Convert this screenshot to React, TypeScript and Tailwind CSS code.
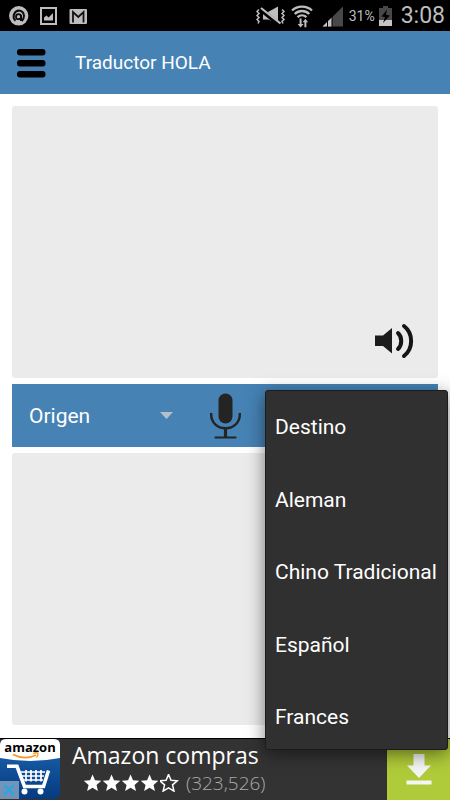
import { useState } from 'react'
import { clsx } from 'clsx'

const ORIGINS = ['Origen', 'Aleman', 'Chino Tradicional', 'Español', 'Frances']
const TARGETS = ['Destino', 'Aleman', 'Chino Tradicional', 'Español', 'Frances']

const STAR = 'M10 1l2.6 6.1 6.6.6-5 4.3 1.5 6.5L10 15.1l-5.7 3.4 1.5-6.5-5-4.3 6.6-.6z'

function StatusBar() {
  return (
    <div className="flex h-[31px] items-center justify-between bg-black pr-[5px] pl-2 font-['Roboto',sans-serif] text-[#bdbdbd]">
      <div className="flex items-center gap-[11px]">
        <svg width="21" height="20" viewBox="0 0 21 20" fill="none">
          <circle cx="10.7" cy="9.8" r="9.7" fill="#bdbdbd" />
          <path d="M7.500 14.800A6 6 0 0 1 10.700 4.500a5.300 5.300 0 0 1 5.300 5.300c0 2.400-.8 3.800-2.200 5.200" stroke="#0a0a0a" strokeWidth="2" />
          <path d="M13 9v6" stroke="#0a0a0a" strokeWidth="2" />
          <circle cx="10.500" cy="10.700" r="2.500" stroke="#0a0a0a" strokeWidth="1.800" />
        </svg>
        <svg width="18" height="20" viewBox="0 0 18 20">
          <path fillRule="evenodd" d="M0 1h17v18H0zM2 3v14h13V3z" fill="#bdbdbd" />
          <path d="M4 14.500v-3l2.500-2 2 2L13 7v7.500z" fill="#bdbdbd" />
        </svg>
        <svg width="19" height="20" viewBox="0 0 19 20" fill="none">
          <rect x="0.500" y="3" width="17.500" height="15" rx="1" fill="#bdbdbd" />
          <path d="M4 16.500V6l5.300 5L14.500 6v10.500" stroke="#111" strokeWidth="1.800" />
        </svg>
      </div>
      <div className="flex items-center">
        <svg width="92" height="24" viewBox="0 0 92 24" fill="none" className="mr-px">
          <g stroke="#bdbdbd" strokeWidth="1.500">
            <path d="M3 5.500l-2 2 2 2-2 2 2 2-2 2 2 2-1 2" />
            <path d="M26 5.500l2 2-2 2 2 2-2 2 2 2-2 2 1 2" />
          </g>
          <path d="M7 8h5L22 2.500v17L12 15.500H7z" fill="#bdbdbd" />
          <path d="M5 5.500L23 20.500" stroke="#000" strokeWidth="4.500" />
          <path d="M5 4L24.500 19.500" stroke="#bdbdbd" strokeWidth="2.200" />
          <g stroke="#bdbdbd" strokeWidth="2.300">
            <path d="M36 6.500c5.500-5.200 14.500-5.200 20 0" />
            <path d="M38.700 10c4.300-4 10.300-4 14.600 0" />
            <path d="M41.500 13.200c2.700-2.500 6.300-2.500 9 0" />
          </g>
          <path d="M43.600 14.500h2v5.500h2L44.600 23.500l-3-3.500h2zM48.400 23.200h2v-5h1.700L49.400 14.700l-2.800 3.500h1.800z" fill="#bdbdbd" />
          <path d="M87 2.500v20H66.500z" fill="#484848" />
          <path d="M76 13.200v9.300h-9.500z" fill="#c4c4c4" />
          <path d="M71.500 17v6M76 12v11" stroke="#000" />
        </svg>
        <span className="text-[14px] leading-5">31%</span>
        <svg width="13" height="22" viewBox="0 0 13 22" className="mr-[9px] ml-1">
          <path d="M4 1h5v2h4v18H0V3h4z" fill="#484848" />
          <path d="M0 15h13v6H0z" fill="#c4c4c4" />
          <path d="M8 4.500L2.500 11.500l3.500.5-2 6L11 10.500l-4-.8z" fill="#000" />
        </svg>
        <span className="text-[23px] leading-6">3:08</span>
      </div>
    </div>
  )
}

function AppHeader() {
  return (
    <header className="flex h-[63px] items-center gap-[29px] bg-[#4682b4] px-[17px]">
      <button type="button" aria-label="Menú">
        <svg width="29" height="30" viewBox="0 0 29 30">
          <rect y="1" width="28.500" height="6.500" rx="3" />
          <rect y="12" width="28.500" height="6.500" rx="3" />
          <rect y="23" width="28.500" height="6.500" rx="3" />
        </svg>
      </button>
      <h1 className="text-[19px] leading-6 text-white">Traductor HOLA</h1>
    </header>
  )
}

function LanguageMenu({ onSelect }: { onSelect: (value: string) => void }) {
  return (
    <ul className="absolute top-[6px] -right-[10px] z-10 flex h-[360px] w-[183px] flex-col justify-between rounded-[3px] border border-[#1c1c1c] bg-[#303030] pt-6 pb-5 shadow-[0_4px_18px_rgba(0,0,0,0.5)]">
      {TARGETS.map((name) => (
        <li key={name}>
          <button
            type="button"
            onClick={() => onSelect(name)}
            className="block w-full px-[9px] text-left text-[21px] leading-6 whitespace-nowrap text-white"
          >
            {name}
          </button>
        </li>
      ))}
    </ul>
  )
}

function LanguageBar() {
  const [origin, setOrigin] = useState('Origen')
  const [target, setTarget] = useState('Destino')
  const [isOpen, setIsOpen] = useState(true)

  function handleSelect(value: string) {
    setTarget(value)
    setIsOpen(false)
  }

  return (
    <div className="relative flex h-[63px] items-center bg-[#4682b4]">
      <div className="relative w-[178px]">
        <select
          aria-label="Idioma de origen"
          value={origin}
          onChange={(event) => setOrigin(event.target.value)}
          className="w-full appearance-none bg-transparent pr-9 pl-[17px] text-[21px] leading-8 text-white"
        >
          {ORIGINS.map((name) => (
            <option key={name} className="bg-[#303030]">
              {name}
            </option>
          ))}
        </select>
        <svg width="13" height="8" viewBox="0 0 13 8" className="pointer-events-none absolute top-3 right-[17px]">
          <path d="M0 0h13L6.500 7z" fill="#b4c0c9" />
        </svg>
      </div>
      <button type="button" aria-label="Dictar" className="ml-5">
        <svg width="32" height="46" viewBox="0 0 32 46" fill="none">
          <rect x="8.500" y="0.500" width="14" height="30" rx="7" fill="#242424" />
          <path d="M1.200 20v1.500c0 8 6 13.700 14.300 13.700s14.300-5.700 14.300-13.700V20" stroke="#242424" strokeWidth="2.400" />
          <path d="M15.500 35v9.500" stroke="#242424" strokeWidth="3.200" />
          <path d="M5.500 44.500h20" stroke="#242424" strokeWidth="2.200" strokeLinecap="round" />
        </svg>
      </button>
      <button
        type="button"
        aria-haspopup="true"
        aria-expanded={isOpen}
        onClick={() => setIsOpen(!isOpen)}
        className={clsx('ml-5 flex-1 text-left text-[21px] leading-8 text-white', isOpen && 'invisible')}
      >
        {target}
      </button>
      {isOpen && <LanguageMenu onSelect={handleSelect} />}
    </div>
  )
}

function AdBanner() {
  return (
    <footer className="mt-auto flex h-[62px] border-t border-black bg-[#333] font-['Open_Sans',sans-serif] text-white">
      <div className="relative h-[60px] w-[60px] shrink-0 rounded-md bg-linear-to-b from-[#1e67b2] to-[#063a80]">
        <svg width="60" height="60" viewBox="0 0 60 60" fill="none" className="absolute inset-0">
          <path d="M0 6Q0 0 6 0h48Q60 0 60 6v13Q30 25 0 19z" fill="#fff" />
          <path d="M13 15.500q12 6 23 .5" stroke="#f79a1e" strokeWidth="1.800" />
          <path d="M33 14.500c2-.8 4-.9 5-.4.4 1.500-.4 3-1.500 4.400" stroke="#f79a1e" strokeWidth="1.300" />
          <path d="M7 27.300h10l7.500 20.200h19L48.500 31.500" stroke="#fff" strokeWidth="3.600" />
          <path d="M21 33h24M22 37h22M23 41h20M26 31v11.500M31 31v11.500M36 31v11.500M41 31v11.500" stroke="#fff" strokeWidth="1.700" />
          <circle cx="24.500" cy="52.500" r="3" fill="#fff" />
          <circle cx="40.500" cy="52.500" r="3" fill="#fff" />
        </svg>
        <p className="relative text-center text-[13px] leading-4 font-bold text-black">amazon</p>
        <button type="button" aria-label="Cerrar anuncio" className="absolute bottom-0 left-0 bg-[#9fb6cf]/70">
          <svg width="19" height="18" viewBox="0 0 19 18">
            <path d="M4 4l10 10M14 4L4 14" stroke="#24a8de" strokeWidth="2" />
          </svg>
        </button>
      </div>
      <div className="min-w-0 flex-1 pl-3">
        <p className="text-[23px] leading-8">Amazon compras</p>
        <div className="flex items-center pl-3">
          {[1, 2, 3, 4, 5].map((n) => (
            <svg key={n} width="19" height="18" viewBox="1 1 20 18" fill={n < 5 ? '#fff' : 'none'}>
              <path d={STAR} stroke="#fff" strokeWidth={n < 5 ? 0 : 1.6} />
            </svg>
          ))}
          <span className="ml-[7px] text-[19px] leading-6 font-light text-[#aaa]">(323,526)</span>
        </div>
      </div>
      <button type="button" aria-label="Descargar" className="flex w-[63px] justify-center bg-[#b0cb39] pt-[14px]">
        <svg width="26" height="32" viewBox="0 0 26 32">
          <path d="M7.500 1h11v11.500H25L13 25 1 12.500h6.500zM0.500 27.500h25v4h-25z" fill="#f5f5f5" />
        </svg>
      </button>
    </footer>
  )
}

export default function App() {
  return (
    <div className="flex min-h-screen flex-col overflow-x-hidden bg-white font-['Roboto',sans-serif]">
      <StatusBar />
      <AppHeader />
      <main className="flex flex-col gap-[6px] px-3 py-3">
        <div className="relative">
          <textarea
            aria-label="Texto a traducir"
            className="block h-[272px] w-full resize-none rounded-[3px] bg-[#ebebeb] p-3 text-lg outline-none"
          />
          <button type="button" aria-label="Escuchar" className="absolute right-6 bottom-[18px]">
            <svg width="39" height="38" viewBox="0 0 39 38" fill="none">
              <path d="M0 13.500h8L17 6v25.500l-9-7.500H0z" fill="#1c1c1c" />
              <path d="M23 11c4.300 4 4.300 12 0 16" stroke="#151515" strokeWidth="4" strokeLinecap="round" />
              <path d="M29 4c9.500 7.500 9.500 22.500 0 30" stroke="#151515" strokeWidth="4" strokeLinecap="round" />
            </svg>
          </button>
        </div>
        <LanguageBar />
        <textarea
          aria-label="Traducción"
          readOnly
          className="block h-[272px] w-full resize-none rounded-[3px] bg-[#ebebeb] p-3 text-lg outline-none"
        />
      </main>
      <AdBanner />
    </div>
  )
}
